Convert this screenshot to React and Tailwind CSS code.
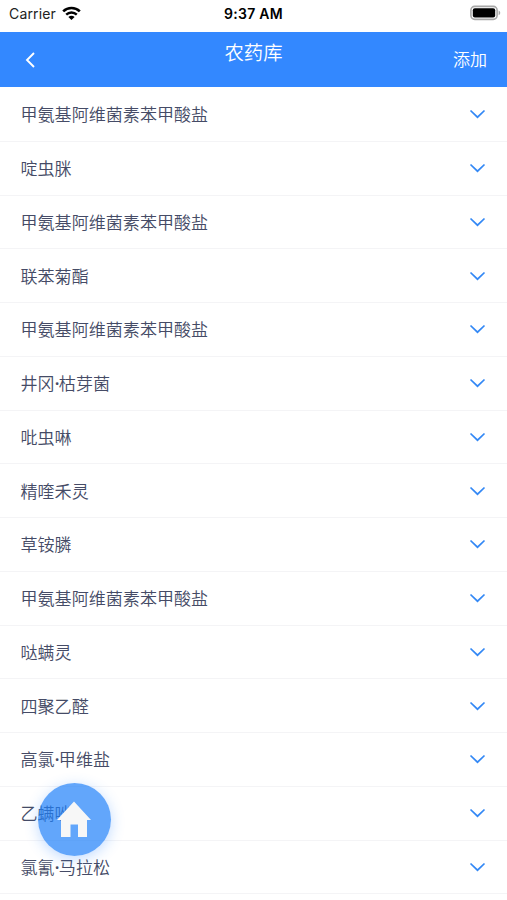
import React from "react";

const pesticides = [
  "甲氨基阿维菌素苯甲酸盐",
  "啶虫脒",
  "甲氨基阿维菌素苯甲酸盐",
  "联苯菊酯",
  "甲氨基阿维菌素苯甲酸盐",
  "井冈·枯芽菌",
  "吡虫啉",
  "精喹禾灵",
  "草铵膦",
  "甲氨基阿维菌素苯甲酸盐",
  "哒螨灵",
  "四聚乙醛",
  "高氯·甲维盐",
  "乙螨唑",
  "氯氰·马拉松",
];

const StatusBar = () => {
  return (
    <div className="relative h-[31.5px] flex items-start justify-between pl-[9px] pr-[6px] font-['Inter','Liberation_Sans',sans-serif] font-normal text-black">
      <div className="flex items-center h-7">
        <span className="text-[14px] leading-7 tracking-[0.15px] text-[#222]">Carrier</span>
        <svg className="ml-[6px] mb-[2px]" width="19" height="15" viewBox="0 0 19 15" fill="none">
          <path d="M1.2 5.4C5.8 0.9 13.2 0.9 17.8 5.4" stroke="#000" strokeWidth="2.6" />
          <path d="M4.2 8.6C7.2 5.7 11.8 5.7 14.8 8.6" stroke="#000" strokeWidth="2.4" />
          <path d="M9.5 14L6.4 10.9C8.1 9.3 10.9 9.3 12.6 10.9Z" fill="#000" />
        </svg>
      </div>
      <span className="absolute left-1/2 -translate-x-1/2 top-0 leading-7 text-[14px] font-semibold tracking-[0.25px] whitespace-nowrap">
        9:37 AM
      </span>
      <svg className="mt-[5px]" width="31" height="16" viewBox="0 0 31 16">
        <rect x="0.9" y="1.4" width="26.2" height="13" rx="3.8" fill="#fff" stroke="#a8a8a8" strokeWidth="1.6" />
        <rect x="2.8" y="3.2" width="22.4" height="9.4" rx="2" fill="#000" />
        <path d="M28.6 5.6C30.8 6.6 30.8 9.4 28.6 10.3Z" fill="#a8a8a8" />
      </svg>
    </div>
  );
};

const Header = () => {
  return (
    <div className="relative h-[55.5px] bg-[#3388ff] text-white flex items-center justify-between pl-[25px] pr-[20px]">
      <svg className="mt-px" width="11" height="16" viewBox="0 0 11 16" fill="none">
        <path d="M9 1L2 8L9 15" stroke="#fff" strokeWidth="1.9" />
      </svg>
      <h1 className="absolute left-1/2 -translate-x-1/2 top-[6px] text-[19.4px] leading-7 whitespace-nowrap">
        农药库
      </h1>
      <button className="text-[17.07px] leading-6">添加</button>
    </div>
  );
};

// the CJK font draws the middle dot full width, so it gets a latin one
const Name = ({ text }) => {
  const [first, second] = text.split("·");
  return (
    <span className="text-[17.07px] leading-6 text-[#454b66]">
      {first}
      {second && (
        <>
          <span className="font-['Noto_Sans',sans-serif] font-semibold leading-none tracking-[-0.5px]">·</span>
          {second}
        </>
      )}
    </span>
  );
};

const Row = ({ name }) => {
  return (
    <li className="h-[53.75px] flex items-center justify-between pl-[20.5px] pr-[21px] border-b border-[#f4f4f6]">
      <Name text={name} />
      <svg width="17" height="10" viewBox="0 0 17 10" fill="none">
        <path d="M1.5 1.5L8.5 8.2L15.5 1.5" stroke="#3388f5" strokeWidth="1.7" />
      </svg>
    </li>
  );
};

const App = () => {
  return (
    <div className="relative w-[507px] h-[900px] overflow-hidden bg-white font-['Noto_Sans_CJK_SC',sans-serif] font-[350]">
      <StatusBar />
      <Header />
      <ul className="pt-px">
        {pesticides.map((name, i) => (
          <Row key={i} name={name} />
        ))}
      </ul>

      {/* floating home button */}
      <button className="absolute left-[37.5px] top-[782.5px] w-[73.5px] h-[73.5px] rounded-full bg-[#1f80fa]/70 flex items-center justify-center shadow-[0_3px_14px_rgba(51,136,255,0.3)]">
        <svg className="mt-px" width="36" height="37" viewBox="0 0 36 37">
          <path d="M18 0.5L35 19H31V36H22V23.5H14.5V36H5V19H1Z" fill="#f7f7f7" />
        </svg>
      </button>
    </div>
  );
};

export default App;
